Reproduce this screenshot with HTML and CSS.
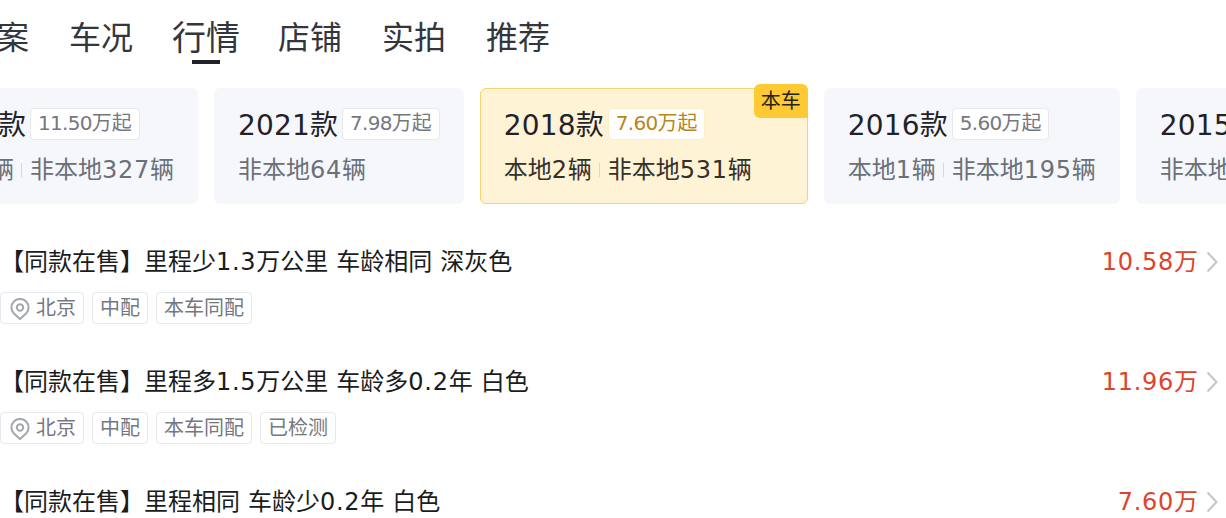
FILE: index.html
```html
<!DOCTYPE html>
<html lang="zh-CN">
<head>
<meta charset="utf-8">
<title>行情</title>
<link rel="stylesheet" href="styles.css">
</head>
<body>
<nav class="tabs">
  <span class="tab">档案</span>
  <span class="tab">车况</span>
  <span class="tab tab-active">行情</span>
  <span class="tab">店铺</span>
  <span class="tab">实拍</span>
  <span class="tab">推荐</span>
</nav>
<section class="cards">
  <div class="card">
    <div class="card-head"><span class="year"><span class="n">2022</span>款</span><span class="from"><span class="n">11.50</span>万起</span></div>
    <div class="card-sub"><span>本地<span class="n">1</span>辆</span><i class="sep"></i><span>非本地<span class="n">327</span>辆</span></div>
  </div>
  <div class="card">
    <div class="card-head"><span class="year"><span class="n">2021</span>款</span><span class="from"><span class="n">7.98</span>万起</span></div>
    <div class="card-sub"><span>非本地<span class="n">64</span>辆</span></div>
  </div>
  <div class="card card-active">
    <span class="badge">本车</span>
    <div class="card-head"><span class="year"><span class="n">2018</span>款</span><span class="from"><span class="n">7.60</span>万起</span></div>
    <div class="card-sub"><span>本地<span class="n">2</span>辆</span><i class="sep"></i><span>非本地<span class="n">531</span>辆</span></div>
  </div>
  <div class="card">
    <div class="card-head"><span class="year"><span class="n">2016</span>款</span><span class="from"><span class="n">5.60</span>万起</span></div>
    <div class="card-sub"><span>本地<span class="n">1</span>辆</span><i class="sep"></i><span>非本地<span class="n">195</span>辆</span></div>
  </div>
  <div class="card">
    <div class="card-head"><span class="year"><span class="n">2015</span>款</span><span class="from"><span class="n">4.80</span>万起</span></div>
    <div class="card-sub"><span>非本地<span class="n">88</span>辆</span></div>
  </div>
</section>
<section class="list">
  <article class="item">
    <div class="item-top">
      <span class="item-title">【同款在售】里程少<span class="n">1.3</span>万公里 车龄相同 深灰色</span>
      <span class="item-price"><span class="n">10.58</span>万</span>
      <svg class="chevron" viewBox="0 0 12 22"><path d="M1.5 1.5 10.5 11 1.5 20.5"/></svg>
    </div>
    <div class="tags">
      <span class="tag"><svg class="pin" viewBox="0 0 20 22"><path d="M10 21 3.9 15.6A8.6 8.6 0 1 1 16.1 15.6Z"/><circle cx="10" cy="9.5" r="3.2"/></svg>北京</span>
      <span class="tag">中配</span>
      <span class="tag">本车同配</span>
    </div>
  </article>
  <article class="item">
    <div class="item-top">
      <span class="item-title">【同款在售】里程多<span class="n">1.5</span>万公里 车龄多<span class="n">0.2</span>年 白色</span>
      <span class="item-price"><span class="n">11.96</span>万</span>
      <svg class="chevron" viewBox="0 0 12 22"><path d="M1.5 1.5 10.5 11 1.5 20.5"/></svg>
    </div>
    <div class="tags">
      <span class="tag"><svg class="pin" viewBox="0 0 20 22"><path d="M10 21 3.9 15.6A8.6 8.6 0 1 1 16.1 15.6Z"/><circle cx="10" cy="9.5" r="3.2"/></svg>北京</span>
      <span class="tag">中配</span>
      <span class="tag">本车同配</span>
      <span class="tag">已检测</span>
    </div>
  </article>
  <article class="item">
    <div class="item-top">
      <span class="item-title">【同款在售】里程相同 车龄少<span class="n">0.2</span>年 白色</span>
      <span class="item-price"><span class="n">7.60</span>万</span>
      <svg class="chevron" viewBox="0 0 12 22"><path d="M1.5 1.5 10.5 11 1.5 20.5"/></svg>
    </div>
  </article>
</section>
</body>
</html>
```
FILE: styles.css
```css
* { box-sizing: border-box; }
html, body { margin: 0; height: 518px; overflow: hidden; background: #fff; }
body { font-family: "DejaVu Sans", "Noto Sans CJK SC", sans-serif; color: #1f2329; }

.tabs { display: flex; gap: 40px; height: 88px; margin-left: -35px; padding-top: 15px; }
.tab { position: relative; font-size: 32px; line-height: 46px; height: 46px; color: #33363d; white-space: nowrap; }
.tab-active { font-size: 34px; margin: 0 -2px 0 -1px; }
.tab-active::after { content: ""; position: absolute; left: 20px; top: 45px; width: 28px; height: 4px; background: #1f2329; }

.cards { display: flex; gap: 16px; height: 116px; margin-left: -98px; width: 1400px; }
.card { position: relative; flex: none; height: 116px; padding: 20px 24px 0; background: #f5f7fb; border-radius: 6px; }
.card-active { background: #fff3d6; border: 1px solid #f2d473; padding: 19px 55px 0 23px; }
.card-head { display: flex; align-items: center; gap: 4px; height: 32px; white-space: nowrap; }
.year { font-size: 28px; line-height: 32px; padding-top: 3px; color: #1f2329; }
.year .n { letter-spacing: .2px; }
.from { font-size: 20px; height: 32px; line-height: 28px; padding: 0 7px; color: #74787f; background: #fff; border: 1px solid #e6e8ee; border-radius: 4px; }
.from .n { letter-spacing: -.72px; }
.card-active .from { color: #b9851c; border-color: #fbeec8; }
.card-sub { display: flex; align-items: center; height: 36px; margin-top: 12px; font-size: 24px; line-height: 36px; color: #6b7079; white-space: nowrap; }
.card-sub .n { letter-spacing: .73px; }
.card-active .card-sub { color: #33302a; }
.sep { width: 1px; height: 14px; margin: 0 8px 0 7px; background: #d5d7dc; }
.card-active .sep { background: #e3d8b6; }
.badge { position: absolute; top: -5px; right: -1px; width: 54px; height: 34px; font-size: 20px; line-height: 35px; text-align: center; color: #26231c; background: #ffc933; border-radius: 6px 6px 0 6px; }

.list { padding-top: 40px; }
.item { height: 120px; }
.item-top { display: flex; align-items: center; height: 36px; }
.item-title { flex: 1; font-size: 24px; line-height: 36px; word-spacing: .37px; color: #1a1c20; white-space: nowrap; }
.item-title .n, .item-price .n { letter-spacing: .73px; }
.item-price { font-size: 24px; line-height: 36px; color: #e0432b; white-space: nowrap; }
.chevron { width: 12px; height: 22px; margin: 0 8px 0 8px; fill: none; stroke: #c4c6cb; stroke-width: 2; }
.tags { display: flex; gap: 8px; margin-top: 12px; }
.tag { display: flex; align-items: center; height: 32px; padding: 0 7px 3px; font-size: 20px; color: #74787f; border: 1px solid #e6e8ee; border-radius: 4px; white-space: nowrap; }
.pin { width: 20px; height: 22px; margin: 5px 6px 0 2px; fill: none; stroke: #a3a7ae; stroke-width: 2; }
```
